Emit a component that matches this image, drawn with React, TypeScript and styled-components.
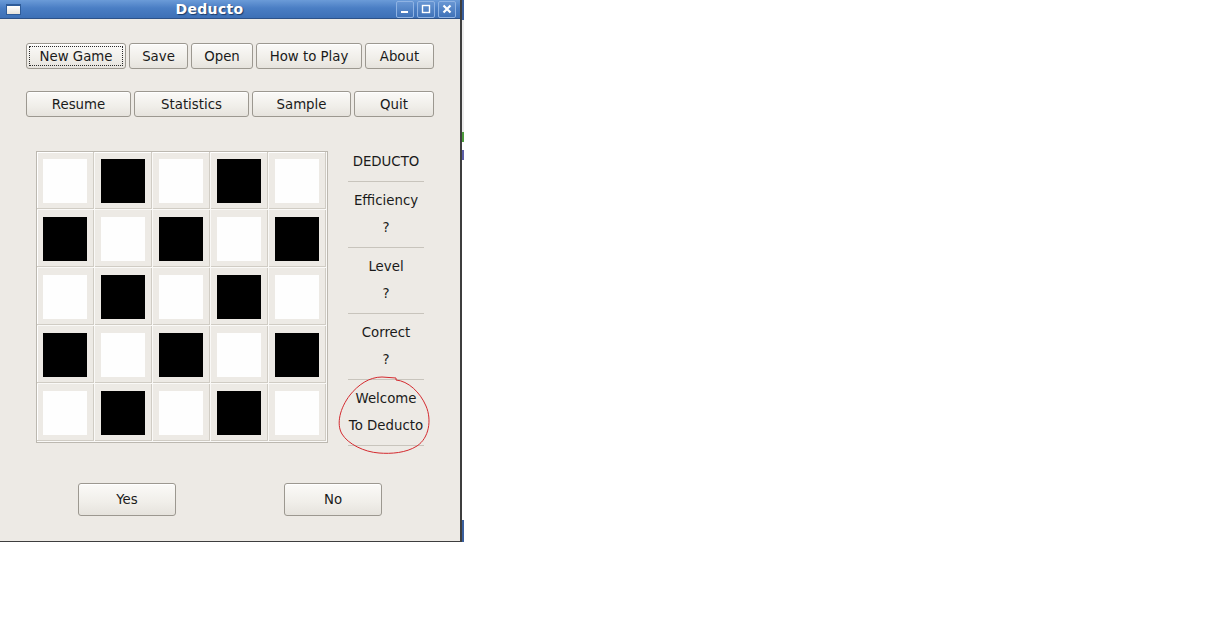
import styled, { createGlobalStyle } from "styled-components";

const GlobalStyle = createGlobalStyle`
  html, body {
    margin: 0;
    padding: 0;
    background: #ffffff;
  }
  body {
    font-family: "DejaVu Sans", "Liberation Sans", sans-serif;
  }
`;

const Desktop = styled.div`
  display: flex;
  align-items: flex-start;
  width: 1208px;
  height: 644px;
  background: #ffffff;
`;

const Window = styled.div`
  width: 460px;
  height: 541px;
  display: flex;
  flex-direction: column;
  background: #edeae5;
  border-right: 2px solid #3e3e3e;
  border-bottom: 1px solid #3e3e3e;
`;

const Strip = styled.div`
  width: 2px;
  height: 542px;
  display: flex;
  flex-direction: column;
`;

const StripPart = styled.div<{ $h: number; $c: string }>`
  height: ${(p) => p.$h}px;
  background: ${(p) => p.$c};
  flex-shrink: 0;
`;

const TitleBar = styled.div`
  height: 18px;
  display: flex;
  align-items: center;
  background: linear-gradient(#6b9bd8, #4a7ec4 45%, #3d70b6);
  border-bottom: 1px solid #2d5288;
  padding: 0 4px 0 6px;
`;

const AppIcon = styled.div`
  width: 13px;
  height: 8px;
  border: 1px solid #2f5c99;
  border-top-width: 2px;
  background: linear-gradient(#ffffff, #e6e2da);
`;

const Title = styled.div`
  flex: 1;
  text-align: center;
  color: #ffffff;
  font-weight: bold;
  font-size: 14px;
  letter-spacing: 0.3px;
  text-shadow: 1px 1px 1px #1d3c68;
  padding-left: 2px;
`;

const TitleButtons = styled.div`
  display: flex;
  gap: 3px;
`;

const TitleButton = styled.div`
  width: 16px;
  height: 15px;
  border: 1px solid #8fb3e3;
  border-radius: 2px;
  background: linear-gradient(#6896d3, #3f72b8);
  display: flex;
  align-items: center;
  justify-content: center;
`;

const Body = styled.div`
  display: flex;
  flex-direction: column;
  padding-left: 26px;
`;

const ButtonRow = styled.div<{ $top: number }>`
  display: flex;
  gap: 3px;
  margin-top: ${(p) => p.$top}px;
`;

const Button = styled.button<{ $w: number; $h?: number; $focus?: boolean }>`
  width: ${(p) => p.$w}px;
  height: ${(p) => p.$h ?? 26}px;
  box-sizing: border-box;
  padding: 0;
  font-family: "DejaVu Sans", "Liberation Sans", sans-serif;
  font-size: 13.33px;
  color: #1a1a1a;
  border: 1px solid #9c9890;
  border-radius: 3px;
  background: linear-gradient(#fbfaf8, #f0eee9 60%, #e6e3dd);
  box-shadow: inset 0 1px 0 #ffffff;
  outline: ${(p) => (p.$focus ? "1px dotted #2a2a2a" : "none")};
  outline-offset: -4px;
`;

const GameArea = styled.div`
  display: flex;
  align-items: flex-start;
  margin-top: 31px;
  padding-left: 10px;
`;

const Board = styled.div`
  margin-top: 3px;
  display: grid;
  grid-template-columns: repeat(5, 58px);
  grid-auto-rows: 58px;
  border: 1px solid #bcb8b0;
  box-shadow: inset 1px 1px 0 #ffffff;
`;

const Cell = styled.div<{ $dark: boolean }>`
  box-sizing: border-box;
  padding: 7px 8px 7px 6px;
  box-shadow: inset -1px -1px 0 #faf9f7, inset -2px -2px 0 #d0ccc4;
  &::before {
    content: "";
    display: block;
    width: 44px;
    height: 44px;
    background: ${(p) => (p.$dark ? "#000000" : "#fefefe")};
  }
`;

const Panel = styled.div`
  position: relative;
  width: 92px;
  margin-left: 12px;
  display: flex;
  flex-direction: column;
`;

const PanelText = styled.div`
  height: 27px;
  line-height: 28px;
  text-align: center;
  font-size: 13.33px;
  color: #1a1a1a;
  white-space: nowrap;
`;

const Divider = styled.div`
  height: 1px;
  margin: 6px 8px 5px 8px;
  background: #c8c4bc;
`;

const Scribble = styled.svg`
  position: absolute;
  left: -4px;
  top: 226px;
  pointer-events: none;
`;

const BottomRow = styled.div`
  display: flex;
  gap: 108px;
  margin-top: 32px;
  padding-left: 52px;
`;

const board = [0, 1, 0, 1, 0, 1, 0, 1, 0, 1, 0, 1, 0, 1, 0, 1, 0, 1, 0, 1, 0, 1, 0, 1, 0];

const stats = [
  ["Efficiency", "?"],
  ["Level", "?"],
  ["Correct", "?"],
  ["Welcome", "To Deducto"],
];

const App = (): JSX.Element => {
  return (
    <>
      <GlobalStyle />
      <Desktop>
        <Window>
          <TitleBar>
            <AppIcon />
            <Title>Deducto</Title>
            <TitleButtons>
              <TitleButton>
                <svg width="10" height="10" viewBox="0 0 10 10">
                  <rect x="1" y="7" width="7" height="2" fill="#ffffff" />
                </svg>
              </TitleButton>
              <TitleButton>
                <svg width="10" height="10" viewBox="0 0 10 10">
                  <rect x="1.5" y="1.5" width="7" height="7" fill="none" stroke="#ffffff" strokeWidth="1.4" />
                </svg>
              </TitleButton>
              <TitleButton>
                <svg width="10" height="10" viewBox="0 0 10 10">
                  <path d="M1.5 1.5 L8.5 8.5 M8.5 1.5 L1.5 8.5" stroke="#ffffff" strokeWidth="2.2" />
                </svg>
              </TitleButton>
            </TitleButtons>
          </TitleBar>
          <Body>
            <ButtonRow $top={24}>
              <Button $w={100} $focus>New Game</Button>
              <Button $w={59}>Save</Button>
              <Button $w={62}>Open</Button>
              <Button $w={106}>How to Play</Button>
              <Button $w={69}>About</Button>
            </ButtonRow>
            <ButtonRow $top={22}>
              <Button $w={105}>Resume</Button>
              <Button $w={115}>Statistics</Button>
              <Button $w={99}>Sample</Button>
              <Button $w={80}>Quit</Button>
            </ButtonRow>
            <GameArea>
              <Board>
                {board.map((v, i) => (
                  <Cell key={i} $dark={v === 1} />
                ))}
              </Board>
              <Panel>
                <PanelText>DEDUCTO</PanelText>
                <Divider />
                {stats.map(([a, b]) => (
                  <div key={a}>
                    <PanelText>{a}</PanelText>
                    <PanelText>{b}</PanelText>
                    <Divider />
                  </div>
                ))}
                <Scribble width="98" height="84" viewBox="0 0 98 84">
                  <path
                    d="M46,3 L60,4 L60,6 C72,7 84,18 90,32 C96,46 93,64 81,72 C70,79 55,80 43,79 C28,78 12,70 6,60 C0,50 4,34 14,21 C22,11 33,3 46,3 Z"
                    fill="none"
                    stroke="#d42a2f"
                    strokeWidth="1"
                  />
                </Scribble>
              </Panel>
            </GameArea>
            <BottomRow>
              <Button $w={98} $h={33}>Yes</Button>
              <Button $w={98} $h={33}>No</Button>
            </BottomRow>
          </Body>
        </Window>
        <Strip>
          <StripPart $h={20} $c="#3a5f9e" />
          <StripPart $h={112} $c="#ebebeb" />
          <StripPart $h={10} $c="#4c9a3c" />
          <StripPart $h={8} $c="#ffffff" />
          <StripPart $h={10} $c="#5b5ea6" />
          <StripPart $h={360} $c="#ffffff" />
          <StripPart $h={22} $c="#3a5f9e" />
        </Strip>
      </Desktop>
    </>
  );
};

export default App;
